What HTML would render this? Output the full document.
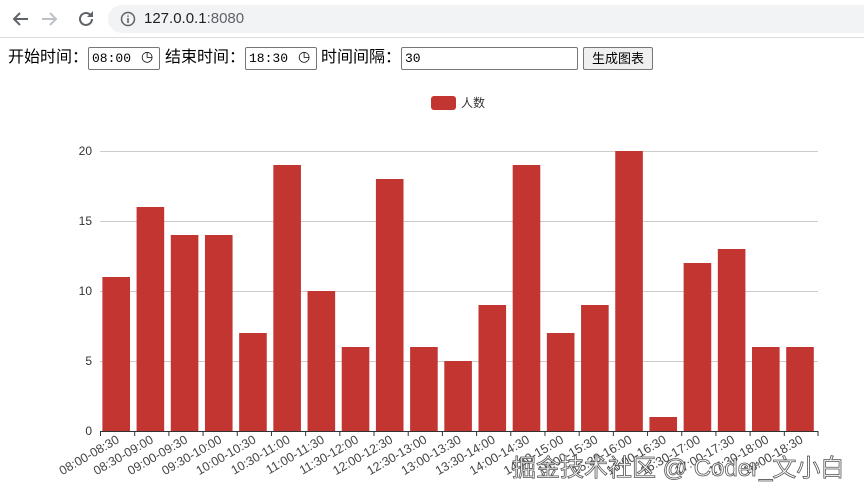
<!DOCTYPE html>
<html><head><meta charset="utf-8"><style>
body{margin:0;width:864px;height:498px;overflow:hidden;background:#fff;font-family:"Liberation Sans","Noto Sans CJK SC",sans-serif;position:relative}
.bar{position:absolute;left:0;top:0;width:864px;height:37px;border-bottom:1px solid #dadce0;background:#fff}
.url{position:absolute;left:108px;top:5px;width:770px;height:28px;border-radius:14px;background:#f1f3f4;font-size:15px;color:#202124;line-height:28px}
.t{position:absolute;top:47px;font-size:16px;color:#000;white-space:nowrap;line-height:22px}
.inp{position:absolute;top:47px;border:1px solid #767676;border-radius:2px;height:23px;font-size:13px;line-height:21px;box-sizing:border-box;padding-left:3px;font-family:"Liberation Mono",monospace;background:#fff}
.btn{position:absolute;top:47px;border:1px solid #767676;border-radius:2px;background:#efefef;height:23px;font-size:13px;line-height:21px;box-sizing:border-box;text-align:center}
</style></head><body>
<div class="bar">
<svg width="100" height="37" style="position:absolute;left:0;top:0">
<g fill="none" stroke-width="2"><path d="M28 19H14M20 13l-6 6 6 6" stroke="#5f6368"/><path d="M42 19h14M50 13l6 6-6 6" stroke="#bdc1c6"/>
<path d="M92 19a6 6 0 1 1-2-4.5" stroke="#5f6368"/></g><path d="M93 11v6h-6z" fill="#5f6368"/></svg>
<div class="url"><svg width="16" height="16" style="position:absolute;left:12px;top:6px"><circle cx="8" cy="8" r="6.5" fill="none" stroke="#5f6368" stroke-width="1.5"/><path d="M8 7v5M8 4.5v1.3" stroke="#5f6368" stroke-width="1.6"/></svg><span style="position:absolute;left:36px">127.0.0.1<span style="color:#5f6368">:8080</span></span></div>
</div>
<span class="t" style="left:8px">开始时间：</span>
<span class="inp" style="left:88px;width:72px">08:00<span style="position:absolute;left:52px;font-size:14px">◷</span></span>
<span class="t" style="left:165px">结束时间：</span>
<span class="inp" style="left:245px;width:72px">18:30<span style="position:absolute;left:52px;font-size:14px">◷</span></span>
<span class="t" style="left:321px">时间间隔：</span>
<span class="inp" style="left:401px;width:177px">30</span>
<span class="btn" style="left:583px;width:70px">生成图表</span>
<svg width="864" height="498" style="position:absolute;left:0;top:0" font-family="Liberation Sans,Noto Sans CJK SC,sans-serif">
<rect x="431" y="96" width="25" height="14" rx="3" fill="#c23531"/><text x="461" y="107" font-size="12" fill="#333">人数</text>
<g stroke="#ccc" stroke-width="1"><line x1="100" x2="818" y1="151.5" y2="151.5"/><line x1="100" x2="818" y1="221.5" y2="221.5"/><line x1="100" x2="818" y1="291.5" y2="291.5"/><line x1="100" x2="818" y1="361.5" y2="361.5"/></g>
<g font-size="12" fill="#333" text-anchor="end"><text x="92" y="155">20</text><text x="92" y="225">15</text><text x="92" y="295">10</text><text x="92" y="365">5</text><text x="92" y="435">0</text></g>
<g id="bars" fill="#c23531"></g>
<line x1="100" x2="818" y1="431.5" y2="431.5" stroke="#333"/>
<g id="ticks" stroke="#333"></g>
<g id="labs" font-size="12.5" fill="#444" text-anchor="end"></g>
<text x="512" y="476" font-size="24" fill="#fff" stroke="#555" stroke-width="0.8">掘金技术社区 @ Coder_文小白</text>
</svg>
<script>
var v=[11,16,14,14,7,19,10,6,18,6,5,9,19,7,9,20,1,12,13,6,6];
var L=["08:00-08:30","08:30-09:00","09:00-09:30","09:30-10:00","10:00-10:30","10:30-11:00","11:00-11:30","11:30-12:00","12:00-12:30","12:30-13:00","13:00-13:30","13:30-14:00","14:00-14:30","14:30-15:00","15:00-15:30","15:30-16:00","16:00-16:30","16:30-17:00","17:00-17:30","17:30-18:00","18:00-18:30"];
var w=718/21,b="",t="",l="";
for(var i=0;i<21;i++){var x=100+i*w,c=x+w/2,h=v[i]*14;
b+='<rect x="'+(c-14.7)+'" y="'+(431-h)+'" width="27.6" height="'+h+'"/>';
t+='<line x1="'+(x+.5)+'" x2="'+(x+.5)+'" y1="431" y2="436"/>';
l+='<text transform="translate('+(c+3)+',442) rotate(-30)">'+L[i]+'</text>';}
t+='<line x1="818" x2="818" y1="431" y2="436"/>';
document.getElementById('bars').innerHTML=b;document.getElementById('ticks').innerHTML=t;document.getElementById('labs').innerHTML=l;
</script>
</body></html>
